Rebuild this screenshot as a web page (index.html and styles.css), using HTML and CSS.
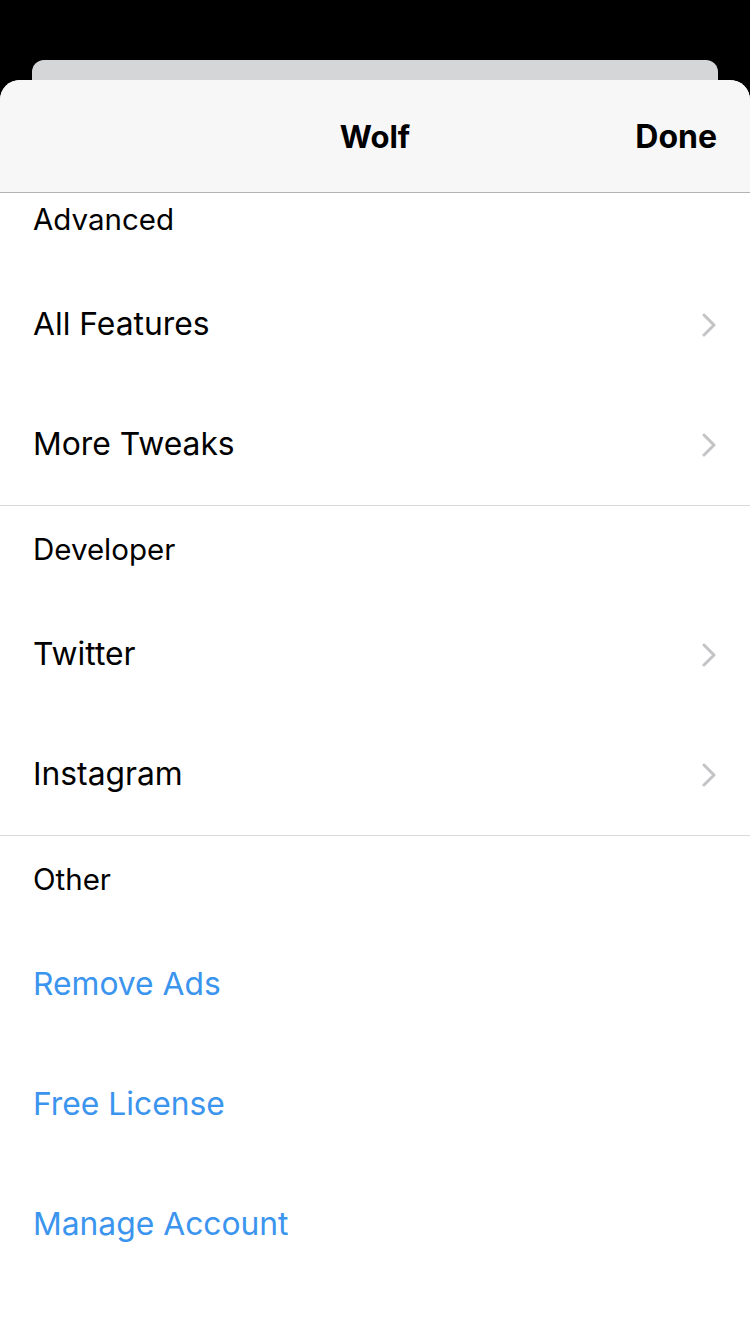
FILE: index.html
```html
<!DOCTYPE html>
<html lang="en">
<head>
  <meta charset="UTF-8" />
  <meta name="viewport" content="width=device-width, initial-scale=1.0" />
  <title>Wolf</title>
  <link rel="stylesheet" href="styles.css">
</head>
<body>
  <div class="back-card"></div>
  <div class="sheet">
    <div class="nav-bar">
      <span class="nav-title">Wolf</span>
      <span class="nav-done">Done</span>
    </div>

    <div class="section first">
      <div class="section-header">Advanced</div>
      <div class="row">
        <span>All Features</span>
        <svg class="chevron" viewBox="0 0 14 24"><path d="M2 2 L12 12 L2 22" /></svg>
      </div>
      <div class="row">
        <span>More Tweaks</span>
        <svg class="chevron" viewBox="0 0 14 24"><path d="M2 2 L12 12 L2 22" /></svg>
      </div>
    </div>

    <div class="section">
      <div class="section-header">Developer</div>
      <div class="row">
        <span>Twitter</span>
        <svg class="chevron" viewBox="0 0 14 24"><path d="M2 2 L12 12 L2 22" /></svg>
      </div>
      <div class="row">
        <span>Instagram</span>
        <svg class="chevron" viewBox="0 0 14 24"><path d="M2 2 L12 12 L2 22" /></svg>
      </div>
    </div>

    <div class="section last">
      <div class="section-header">Other</div>
      <div class="row link">Remove Ads</div>
      <div class="row link">Free License</div>
      <div class="row link">Manage Account</div>
    </div>
  </div>
</body>
</html>
```

FILE: styles.css
```css
* {
  box-sizing: border-box;
  margin: 0;
  padding: 0;
}
body {
  font-family: Inter, "Noto Sans", sans-serif;
  background: #000;
  width: 750px;
  height: 1334px;
  overflow: hidden;
  padding-top: 60px;
}
.back-card {
  height: 40px;
  margin: 0 32px -20px;
  background: #d5d6d8;
  border-radius: 12px 12px 0 0;
}
.sheet {
  position: relative;
  background: #fff;
  border-radius: 20px 20px 0 0;
  overflow: hidden;
  height: 1254px;
}
.nav-bar {
  height: 113px;
  background: #f7f7f7;
  border-bottom: 1px solid #b2b2b2;
  display: flex;
  align-items: center;
  justify-content: center;
  padding: 0 33px;
  position: relative;
}
.nav-title {
  font-size: 31px;
  font-weight: 700;
  color: #000;
}
.nav-done {
  position: absolute;
  right: 33px;
  font-size: 32px;
  font-weight: 700;
  color: #000;
}
.section {
  border-bottom: 1px solid #d9d9d9;
}
.section.last {
  border-bottom: none;
}
.section-header {
  height: 89px;
  padding: 29px 33px 0;
  font-size: 29.5px;
  color: #000;
  line-height: 1;
}
.section.first .section-header {
  height: 72px;
  padding-top: 12px;
}
.row {
  height: 120px;
  display: flex;
  align-items: center;
  justify-content: space-between;
  padding: 0 34px 3px 33px;
  font-size: 31.8px;
  color: #000;
}
.row .chevron {
  margin-top: 3px;
}
.row.link {
  color: #3b95ee;
}
.chevron {
  width: 14px;
  height: 24px;
  fill: none;
  stroke: #c4c4c7;
  stroke-width: 3;
  stroke-linecap: round;
  stroke-linejoin: round;
}
```
